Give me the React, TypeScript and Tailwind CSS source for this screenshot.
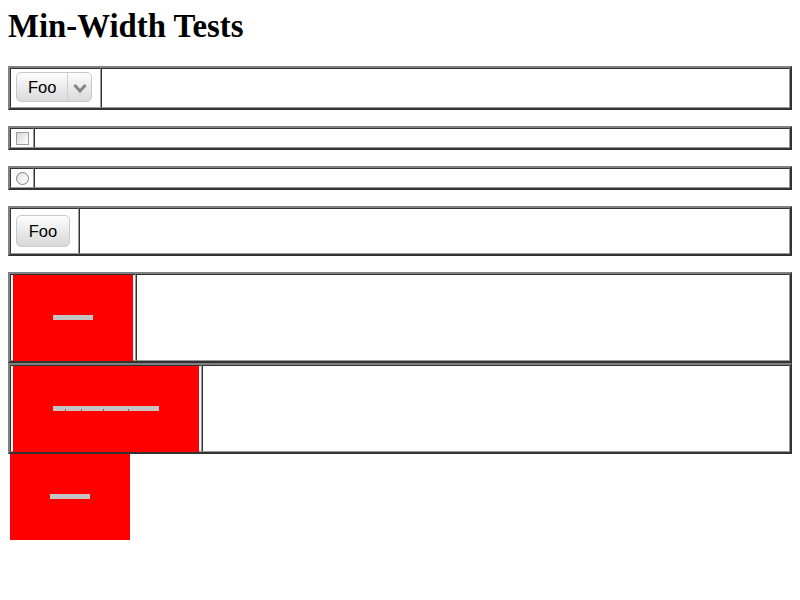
import React from "react";

// outset frame like an old html table with border="1"
const Frame: React.FC<{ className?: string; children: React.ReactNode }> = ({ className = "", children }) => (
  <div
    className={`flex border-2 border-t-[#808080] border-l-[#808080] border-b-[#333333] border-r-[#333333] ${className}`}
  >
    {children}
  </div>
);

const Cell: React.FC<{ className?: string; children?: React.ReactNode }> = ({ className = "", children }) => (
  <div
    className={`border border-t-[#333333] border-l-[#333333] border-b-[#9a9a9a] border-r-[#9a9a9a] ${className}`}
  >
    {children}
  </div>
);

const Slider: React.FC<{ width: number; ticks?: number[] }> = ({ width, ticks = [] }) => (
  <div className="relative h-[86px] bg-[#ff0000]" style={{ width }}>
    <div className="absolute left-[40px] right-[40px] top-[40px] h-[5px] bg-[#c4c4c4]">
      {ticks.map((t) => (
        <div key={t} className="absolute bottom-0 h-[2px] w-px bg-[#666666]" style={{ left: t }} />
      ))}
    </div>
  </div>
);

export default function App() {
  return (
    <div className="min-h-[600px] bg-white px-2 pt-2 font-['Liberation_Sans',Arial,sans-serif] text-black">
      <h1 className="mb-[21px] h-[37px] font-['Liberation_Serif','Times_New_Roman',serif] text-[32.8px] font-bold leading-[37px]">
        Min-Width Tests
      </h1>

      {/* select */}
      <Frame className="mb-[16px] h-[44px]">
        <Cell className="w-[91px] pl-[5px] pt-[3px]">
          <div className="flex h-[30px] w-[76px] items-stretch rounded-[5px] border border-[#c9c9c9] bg-gradient-to-b from-[#fdfdfd] to-[#dadada]">
            <div className="flex w-[50px] items-center pl-[11px] pt-[1px] text-[16.5px] leading-none">Foo</div>
            <div className="w-px bg-[#cfcfcf]" />
            <div className="flex flex-1 items-center justify-center pt-[2px]">
              <svg width="14" height="10" viewBox="0 0 14 10">
                <path d="M1.5 2 L7 8 L12.5 2" fill="none" stroke="#858585" strokeWidth="3" />
              </svg>
            </div>
          </div>
        </Cell>
        <Cell className="flex-1" />
      </Frame>

      {/* checkbox */}
      <Frame className="mb-[16px] h-[24px]">
        <Cell className="w-[24px] pl-[5px] pt-[3px]">
          <div className="h-[13px] w-[13px] border border-[#9c9c9c] bg-gradient-to-br from-[#d8d8d8] to-[#ffffff]" />
        </Cell>
        <Cell className="flex-1" />
      </Frame>

      {/* radio */}
      <Frame className="mb-[16px] h-[24px]">
        <Cell className="w-[24px] pl-[5px] pt-[3px]">
          <div className="h-[13px] w-[13px] rounded-full border border-[#7f7f7f] bg-gradient-to-br from-[#e2e2e2] to-[#ffffff]" />
        </Cell>
        <Cell className="flex-1" />
      </Frame>

      {/* button */}
      <Frame className="mb-[16px] h-[50px]">
        <Cell className="w-[69px] pl-[5px] pt-[6px]">
          <div className="flex h-[32px] w-[54px] items-center justify-center rounded-[5px] border border-[#c9c9c9] bg-gradient-to-b from-[#fdfdfd] to-[#d8d8d8] text-[16.5px] leading-none">
            Foo
          </div>
        </Cell>
        <Cell className="flex-1" />
      </Frame>

      {/* sliders */}
      <Frame className="h-[91px]">
        <Cell className="w-[126px] pl-[2px]">
          <Slider width={120} />
        </Cell>
        <Cell className="flex-1" />
      </Frame>
      <Frame className="h-[91px]">
        <Cell className="w-[192px] pl-[2px]">
          <Slider width={186} ticks={[12, 28, 50, 75]} />
        </Cell>
        <Cell className="flex-1" />
      </Frame>
      <div className="ml-[2px]">
        <Slider width={120} />
      </div>
    </div>
  );
}
